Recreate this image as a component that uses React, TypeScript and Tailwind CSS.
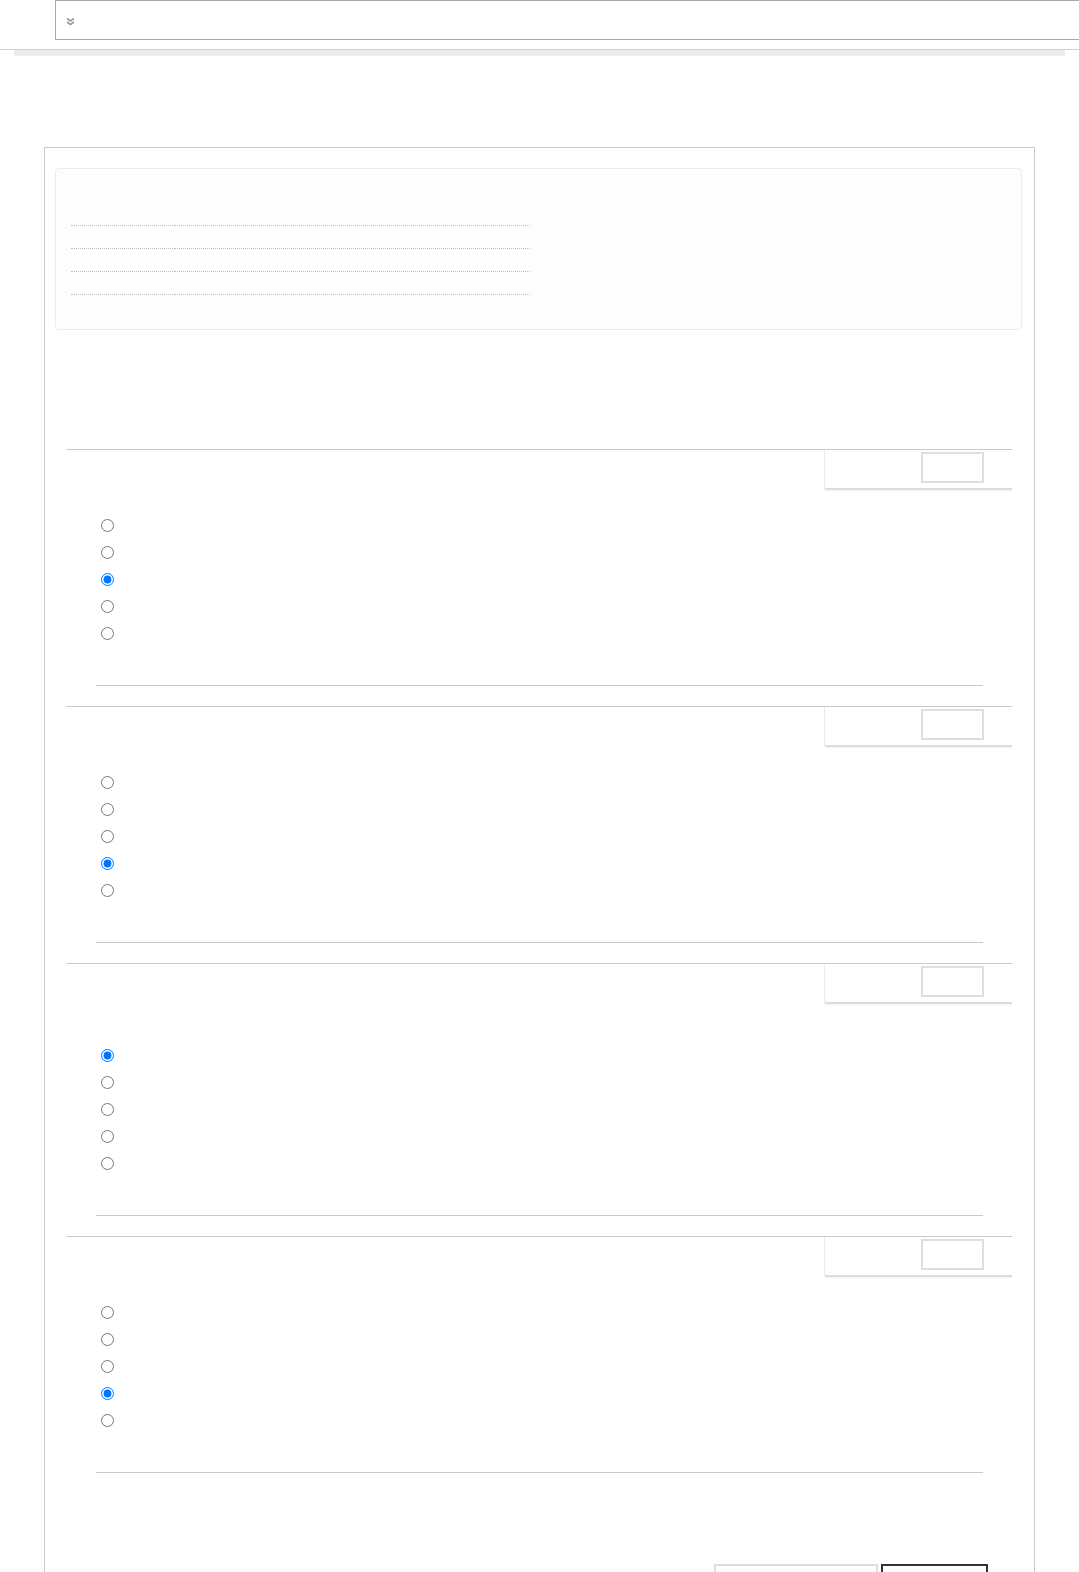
import React from "react"

const sections = [
  { checked: 2, extra: false },
  { checked: 3, extra: false },
  { checked: 0, extra: true },
  { checked: 3, extra: false },
]

function Header() {
  return (
    <div className="h-[50px] border-b border-[#cfcfcf]">
      <div className="ml-[55px] flex h-[40px] items-center border-y border-l border-[#a9a9a9] pl-[10px]">
        <svg width="9" height="9" viewBox="0 0 9 9" className="mt-[3px]">
          <path d="M1 1.5 L4.5 4 L8 1.5" stroke="#9a9a9a" strokeWidth="1.6" fill="none" />
          <path d="M1 5 L4.5 7.5 L8 5" stroke="#9a9a9a" strokeWidth="1.6" fill="none" />
        </svg>
      </div>
    </div>
  )
}

function InfoCard() {
  const rows = [0, 1, 2, 3]
  return (
    <div className="mx-[10px] mr-[12px] mt-[20px] h-[162px] rounded-[4px] border border-[#ececec] bg-[#fdfdfd] pl-[15px] pt-[34px]">
      {rows.map((r) => (
        <div key={r} className="flex h-[23px] w-[459px]">
          <div className="w-[104px] border-b border-dotted border-[#bdbdbd]" />
          <div className="flex-1 border-b border-dotted border-[#bdbdbd]" />
        </div>
      ))}
    </div>
  )
}

function Question({ checked, extra, idx }: { checked: number; extra: boolean; idx: number }) {
  return (
    <div className="mx-[21px] mr-[22px] border-t border-[#cacaca]">
      <div className="flex justify-end">
        <div className="flex h-[40px] w-[188px] justify-end rounded-bl-[3px] border-b-2 border-l border-b-[#dcdcdc] border-l-[#ececec] pr-[28px] pt-[2px] shadow-[0_1px_2px_rgba(0,0,0,0.06)]">
          <div className="h-[31px] w-[63px] border-2 border-[#dedede] bg-white" />
        </div>
      </div>
      <div className={extra ? "pt-[38px]" : "pt-[22px]"}>
        {[0, 1, 2, 3, 4].map((i) => (
          <div key={i} className="flex h-[27px] items-center pl-[35px]">
            <input
              type="radio"
              name={"q" + idx}
              defaultChecked={i === checked}
              className="m-0 h-[13px] w-[13px]"
            />
          </div>
        ))}
      </div>
      <div className="ml-[30px] mr-[29px] mt-[38px] mb-[20px] border-t border-[#cacaca]" />
    </div>
  )
}

export default function App() {
  return (
    <div className="min-h-[1572px] overflow-hidden bg-white font-['Liberation_Sans',sans-serif]">
      <Header />
      <div className="mx-[14px] h-[6px] bg-[#ececec]" />
      <div className="ml-[44px] mt-[91px] w-[991px] border border-[#cccccc] pb-[40px]">
        <InfoCard />
        <div className="mt-[119px]">
          {sections.map((s, i) => (
            <Question key={i} idx={i} checked={s.checked} extra={s.extra} />
          ))}
        </div>
        <div className="mt-[91px] flex justify-end gap-[3px] pr-[46px]">
          <button className="h-[36px] w-[164px] border-2 border-[#dddddd] bg-white" />
          <button className="h-[36px] w-[107px] border-2 border-[#333333] bg-white" />
        </div>
      </div>
    </div>
  )
}
